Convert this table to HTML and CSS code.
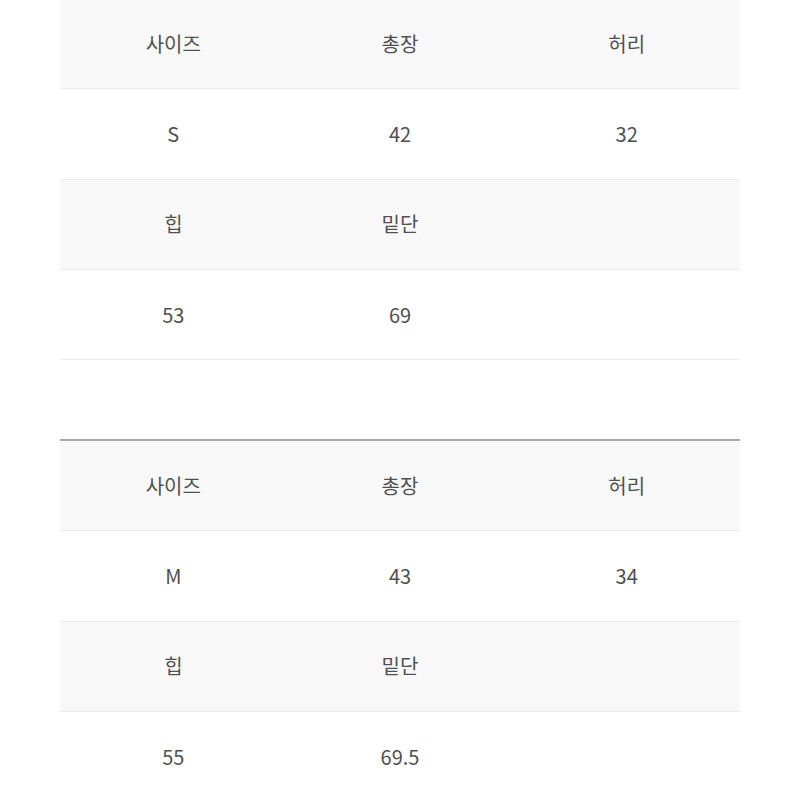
FILE: index.html
```html
<!DOCTYPE html>
<html lang="ko">
<head>
<meta charset="utf-8">
<link rel="stylesheet" href="styles.css">
</head>
<body>
<div class="page">
  <table class="size-table first">
    <tr class="head"><td>사이즈</td><td>총장</td><td>허리</td></tr>
    <tr class="data"><td>S</td><td>42</td><td>32</td></tr>
    <tr class="head"><td>힙</td><td>밑단</td><td></td></tr>
    <tr class="data"><td>53</td><td>69</td><td></td></tr>
  </table>
  <table class="size-table">
    <tr class="head"><td>사이즈</td><td>총장</td><td>허리</td></tr>
    <tr class="data"><td>M</td><td>43</td><td>34</td></tr>
    <tr class="head"><td>힙</td><td>밑단</td><td></td></tr>
    <tr class="data"><td>55</td><td>69.5</td><td></td></tr>
  </table>
</div>
</body>
</html>
```
FILE: styles.css
```css
html, body {
  margin: 0;
  padding: 0;
  background: #fff;
}
body {
  font-family: "Noto Sans CJK KR", "Noto Sans", sans-serif;
  color: #505050;
  overflow: hidden;
}
.page {
  padding: 0 60px;
  display: flex;
  flex-direction: column;
  gap: 79px;
}
.size-table {
  width: 680px;
  border-collapse: collapse;
  table-layout: fixed;
  border-top: 2px solid #a8a8a8;
}
.size-table.first {
  margin-top: -3px;
}
.size-table td {
  height: 89.3px;
  padding: 0;
  text-align: center;
  vertical-align: middle;
  font-size: 20px;
  line-height: 1;
  border-bottom: 1px solid #ebebeb;
}
.size-table .head td {
  background: #f8f8f8;
}
```
